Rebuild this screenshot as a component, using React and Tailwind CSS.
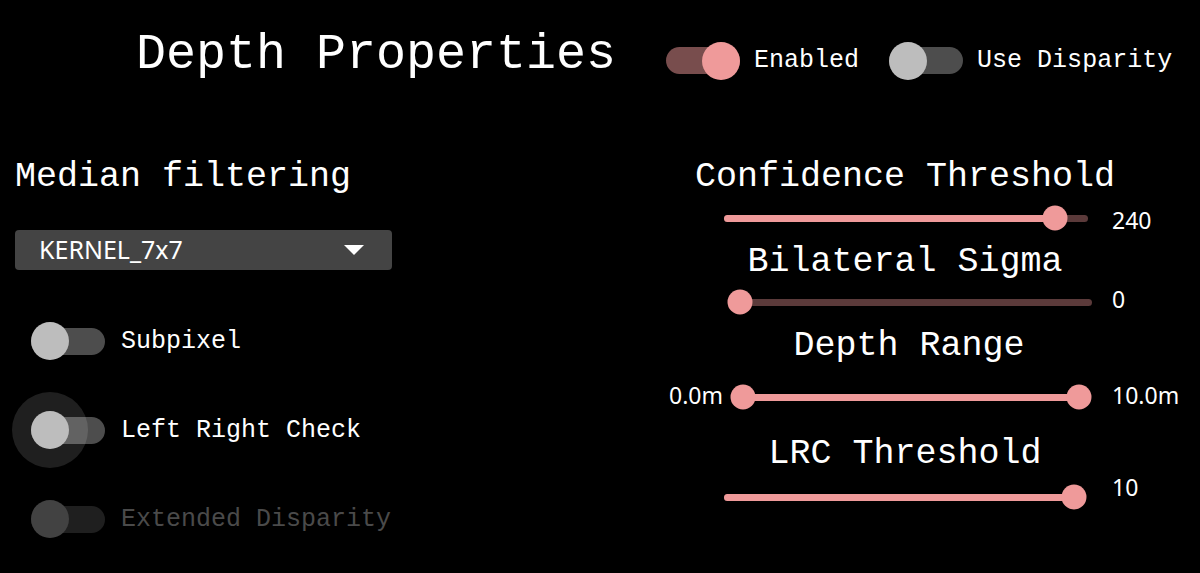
import React from 'react'

const mono = { fontFamily: '"Liberation Mono", "Courier New", monospace' }
const sans = { fontFamily: '"Noto Sans", sans-serif' }

function Switch({ checked, disabled, hover }) {
  const track = disabled ? 'bg-[#1f1f1f]' : checked ? 'bg-[#784d4d]' : 'bg-[#4d4d4d]'
  const thumb = disabled ? 'bg-[#424242]' : checked ? 'bg-[#ef9a9a]' : 'bg-[#bdbdbd]'
  return (
    <div className="relative flex h-[38px] w-[74px] shrink-0 items-center">
      <div className={'h-[27px] w-full rounded-full ' + track} />
      {hover && (
        <div className="absolute left-[-19px] top-[-19px] h-[76px] w-[76px] rounded-full bg-white/[0.12]" />
      )}
      <div
        className={
          'absolute top-0 h-[38px] w-[38px] rounded-full ' +
          thumb +
          (checked ? ' right-0' : ' left-0')
        }
      />
    </div>
  )
}

function ToggleRow({ label, checked, disabled, hover, className }) {
  return (
    <div className={'flex items-center ' + className}>
      <Switch checked={checked} disabled={disabled} hover={hover} />
      <span
        className={
          'ml-[16px] text-[25px] leading-none ' +
          (disabled ? 'text-[#4a4a4a]' : 'text-white')
        }
      >
        {label}
      </span>
    </div>
  )
}

function Slider({ from = 0, to, railClass, fillFrom = 0, dual }) {
  return (
    <div className={'relative h-[7px] rounded-full bg-[#5b3a3a] ' + railClass}>
      <div
        className="absolute top-0 h-[7px] rounded-full bg-[#ef9a9a]"
        style={{ left: fillFrom + '%', width: to - fillFrom + '%' }}
      />
      {dual && (
        <div
          className="absolute top-1/2 h-[25px] w-[25px] -translate-x-1/2 -translate-y-1/2 rounded-full bg-[#ef9a9a]"
          style={{ left: from + '%' }}
        />
      )}
      <div
        className="absolute top-1/2 h-[25px] w-[25px] -translate-x-1/2 -translate-y-1/2 rounded-full bg-[#ef9a9a]"
        style={{ left: to + '%' }}
      />
    </div>
  )
}

function Heading({ children, className }) {
  return (
    <div className={'w-[490px] text-center text-[35px] leading-none ' + className}>
      {children}
    </div>
  )
}

export default function App() {
  return (
    <div className="h-[573px] w-full overflow-hidden bg-black text-white" style={mono}>
      <div className="flex items-center pl-[136px] pt-[30px]">
        <h1 className="mb-[11px] text-[50px] leading-none">Depth Properties</h1>
        <div className="ml-[50px] flex items-center">
          <Switch checked />
          <span className="ml-[14px] text-[25px] leading-none">Enabled</span>
        </div>
        <div className="ml-[30px] flex items-center">
          <Switch />
          <span className="ml-[14px] text-[25px] leading-none">Use Disparity</span>
        </div>
      </div>

      <div className="mt-[69px] flex">
        <div className="w-[660px] shrink-0 pl-[15px]">
          <div className="text-[35px] leading-none">Median filtering</div>
          <div
            className="mt-[35px] flex h-[40px] w-[377px] items-center justify-between rounded-[4px] bg-[#444444] pl-[24px] pr-[28px]"
            style={sans}
          >
            <span className="text-[25px]">KERNEL_7x7</span>
            <svg width="20" height="10" viewBox="0 0 20 10">
              <polygon points="0,0 20,0 10,10" fill="#ffffff" />
            </svg>
          </div>
          <div className="ml-[16px]">
            <ToggleRow label="Subpixel" className="mt-[52px]" />
            <ToggleRow label="Left Right Check" hover className="mt-[51px]" />
            <ToggleRow label="Extended Disparity" disabled className="mt-[51px]" />
          </div>
        </div>

        <div className="w-[540px] shrink-0">
          <Heading>Confidence Threshold</Heading>
          <div className="mt-[11px] flex h-[24px] items-center">
            <Slider to={91} railClass="ml-[64px] w-[364px]" />
            <span className="ml-[24px] mt-[4px] text-[23px]" style={sans}>240</span>
          </div>

          <Heading className="mt-[15px]">Bilateral Sigma</Heading>
          <div className="mt-[10px] flex h-[24px] items-center">
            <Slider to={0} railClass="ml-[80px] w-[352px]" />
            <span className="mb-[6px] ml-[20px] text-[23px]" style={sans}>0</span>
          </div>

          <Heading className="mt-[15px] pl-[8px]">Depth Range</Heading>
          <div className="mt-[21px] flex h-[24px] items-center" style={sans}>
            <span className="mb-[4px] w-[63px] text-right text-[23px]">0.0m</span>
            <Slider from={0} to={100} dual railClass="ml-[20px] w-[336px]" />
            <span className="mb-[4px] ml-[33px] text-[23px]">10.0m</span>
          </div>

          <Heading className="mt-[28px]">LRC Threshold</Heading>
          <div className="mt-[13px] flex h-[24px] items-center">
            <Slider to={100} railClass="ml-[64px] w-[350px]" />
            <span className="mb-[20px] ml-[38px] text-[23px]" style={sans}>10</span>
          </div>
        </div>
      </div>
    </div>
  )
}
